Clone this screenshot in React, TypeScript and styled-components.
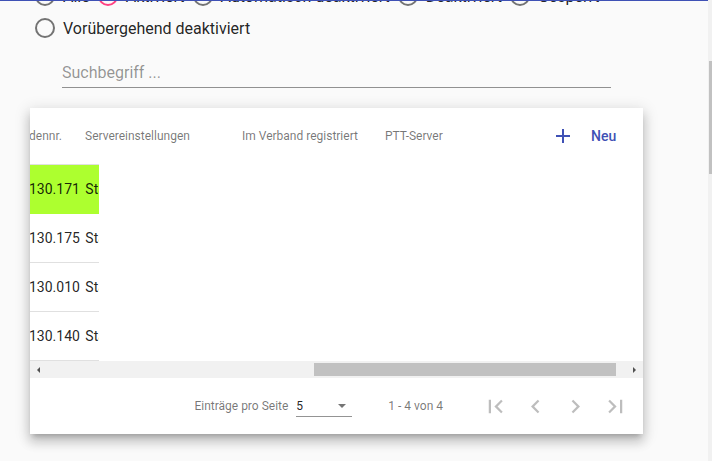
import styled, { createGlobalStyle } from "styled-components";

const GlobalStyle = createGlobalStyle`
  html,
  body {
    margin: 0;
    height: 100%;
    overflow: hidden;
  }

  body {
    background: #fafafa;
    font-family: Roboto, "Noto Sans", sans-serif;
    -webkit-font-smoothing: antialiased;
  }

  #root {
    height: 100%;
  }
`;

// --- page shell -------------------------------------------------------------

const Shell = styled.div`
  display: flex;
  height: 100vh;
`;

const Main = styled.main`
  flex: 1;
  min-width: 0;
  overflow: hidden;
  border-top: 1px solid #3f51b5;
`;

// the page is scrolled down a bit, so the first radio row is cut by the toolbar
const ScrolledContent = styled.div`
  margin-top: -21px;
`;

const PageScrollTrack = styled.div`
  width: 4px;
  flex-shrink: 0;
  background: #f1f1f1;
`;

const PageScrollThumb = styled.div`
  margin: 61px 0 0 1px;
  height: 113px;
  background: #c1c1c1;
`;

// --- status filter ----------------------------------------------------------

const RadioGroup = styled.div`
  display: flex;
  flex-wrap: wrap;
  width: 600px;
  padding-left: 27px;
`;

const RadioOption = styled.label`
  display: flex;
  align-items: center;
  height: 32px;
  font-size: 16px;
  color: rgba(0, 0, 0, 0.87);
  cursor: pointer;
`;

const RadioControl = styled.span<{ $checked?: boolean }>`
  display: flex;
  align-items: center;
  justify-content: center;
  width: 36px;
  height: 32px;
  flex-shrink: 0;

  &::before {
    content: "";
    box-sizing: border-box;
    width: 20px;
    height: 20px;
    border-radius: 50%;
    border: 2px solid
      ${(p) => (p.$checked ? "#ff4081" : "rgba(0, 0, 0, 0.54)")};
    background: ${(p) =>
      p.$checked
        ? "radial-gradient(circle, #ff4081 0 5px, transparent 5.5px)"
        : "transparent"};
  }
`;

const SearchField = styled.div`
  margin: 16px 0 0 62px;
  width: 549px;
  padding-bottom: 3px;
  border-bottom: 1px solid rgba(0, 0, 0, 0.42);
`;

const SearchInput = styled.input`
  display: block;
  width: 100%;
  height: 24px;
  padding: 0;
  border: 0;
  outline: none;
  background: transparent;
  font: 16px Roboto, sans-serif;
  color: rgba(0, 0, 0, 0.87);

  &::placeholder {
    color: rgba(0, 0, 0, 0.42);
  }
`;

// --- table card -------------------------------------------------------------

const Card = styled.section`
  margin: 20px 0 0 30px;
  width: 613px;
  background: #fff;
  box-shadow: 0 5px 5px -3px rgba(0, 0, 0, 0.2),
    0 8px 10px 1px rgba(0, 0, 0, 0.14), 0 3px 14px 2px rgba(0, 0, 0, 0.12);
`;

const HeaderRow = styled.div`
  display: flex;
  height: 56px;
  font-size: 12px;
  color: rgba(0, 0, 0, 0.54);
`;

const HeadCell = styled.div<{ $width?: number; $clipStart?: boolean }>`
  box-sizing: border-box;
  flex: ${(p) => (p.$width ? `0 0 ${p.$width}px` : "1 1 auto")};
  display: flex;
  align-items: center;
  justify-content: ${(p) => (p.$clipStart ? "flex-end" : "flex-start")};
  padding-right: ${(p) => (p.$clipStart ? 23 : 0)}px;
  overflow: hidden;
  white-space: nowrap;

  span {
    flex-shrink: 0;
  }
`;

const AddButton = styled.button`
  display: flex;
  align-items: center;
  gap: 16px;
  padding: 0 27px 0 0;
  border: 0;
  background: none;
  font: 500 14px Roboto, sans-serif;
  color: #3f51b5;
  cursor: pointer;
`;

const Body = styled.div`
  width: 69px;
  border-top: 1px solid rgba(0, 0, 0, 0.12);
`;

const Row = styled.div<{ $highlight?: boolean }>`
  display: flex;
  align-items: center;
  height: 48px;
  overflow: hidden;
  white-space: nowrap;
  font-size: 14px;
  word-spacing: 2px;
  color: rgba(0, 0, 0, 0.87);
  background: ${(p) => (p.$highlight ? "#adff2f" : "transparent")};
  border-bottom: 1px solid
    ${(p) => (p.$highlight ? "#adff2f" : "rgba(0, 0, 0, 0.12)")};

  span {
    margin-left: -1px;
  }
`;

const HScrollBar = styled.div`
  display: flex;
  height: 17px;
  background: #f1f1f1;
`;

const ScrollArrow = styled.div<{ $dir: "left" | "right" }>`
  display: flex;
  align-items: center;
  justify-content: center;
  width: 17px;
  flex-shrink: 0;

  &::before {
    content: "";
    border-top: 3px solid transparent;
    border-bottom: 3px solid transparent;
    ${(p) =>
      p.$dir === "left"
        ? "border-right: 3px solid #505050;"
        : "border-left: 3px solid #505050;"}
  }
`;

const ScrollTrack = styled.div`
  flex: 1;
  display: flex;
  align-items: center;
`;

const ScrollThumb = styled.div`
  height: 13px;
  background: #c1c1c1;
`;

const Paginator = styled.div`
  display: flex;
  align-items: center;
  justify-content: flex-end;
  height: 56px;
  padding: 0 8px;
  font-size: 12px;
  color: rgba(0, 0, 0, 0.54);
`;

const PageSize = styled.div`
  display: flex;
  align-items: center;
  margin-right: 8px;
`;

const PageSizeLabel = styled.span`
  margin: 0 4px;
`;

const PageSizeSelect = styled.div`
  box-sizing: border-box;
  display: flex;
  align-items: center;
  justify-content: space-between;
  width: 56px;
  height: 21px;
  margin: 0 4px;
  padding-right: 6px;
  border-bottom: 1px solid rgba(0, 0, 0, 0.42);
  color: rgba(0, 0, 0, 0.87);
`;

const SelectArrow = styled.span`
  border-left: 4px solid transparent;
  border-right: 4px solid transparent;
  border-top: 4px solid rgba(0, 0, 0, 0.54);
`;

const RangeLabel = styled.span`
  margin: 0 32px 0 24px;
`;

const PageButton = styled.button`
  display: flex;
  align-items: center;
  justify-content: center;
  width: 40px;
  height: 40px;
  padding: 0;
  border: 0;
  background: none;
  color: rgba(0, 0, 0, 0.26);
`;

// --- icons ------------------------------------------------------------------

const paths = {
  add: "M19 13h-6v6h-2v-6H5v-2h6V5h2v6h6v2z",
  first: "M18.41 16.59L13.82 12l4.59-4.59L17 6l-6 6 6 6zM6 6h2v12H6z",
  prev: "M15.41 7.41L14 6l-6 6 6 6 1.41-1.41L10.83 12z",
  next: "M10 6L8.59 7.41 13.17 12l-4.58 4.59L10 18l6-6z",
  last: "M5.59 7.41L10.18 12l-4.59 4.59L7 18l6-6-6-6zM16 6h2v12h-2z",
};

const Icon = ({ name, size = 24 }: { name: keyof typeof paths; size?: number }) => (
  <svg width={size} height={size} viewBox="0 0 24 24" fill="currentColor">
    <path d={paths[name]} />
  </svg>
);

// --- data -------------------------------------------------------------------

const statusOptions = [
  { label: "Alle" },
  { label: "Aktiviert", checked: true },
  { label: "Automatisch deaktiviert" },
  { label: "Deaktiviert" },
  { label: "Gesperrt" },
  { label: "Vorübergehend deaktiviert" },
];

const servers = [
  { id: "130.171 Standort Nord", selected: true },
  { id: "130.175 Standort Süd" },
  { id: "130.010 Standort West" },
  { id: "130.140 Standort Ost" },
];

// horizontal scroll state of the table
const TABLE_WIDTH = 1175;
const VIEW_WIDTH = 613;
const SCROLL_LEFT = 542;
const TRACK = VIEW_WIDTH - 34;

const App = () => {
  const thumbWidth = Math.round((TRACK * VIEW_WIDTH) / TABLE_WIDTH);
  const thumbLeft = Math.round(
    (SCROLL_LEFT / (TABLE_WIDTH - VIEW_WIDTH)) * (TRACK - thumbWidth)
  );

  return (
    <Shell>
      <GlobalStyle />
      <Main>
        <ScrolledContent>
          <RadioGroup>
            {statusOptions.map((o) => (
              <RadioOption key={o.label}>
                <RadioControl $checked={o.checked} />
                {o.label}
              </RadioOption>
            ))}
          </RadioGroup>

          <SearchField>
            <SearchInput placeholder="Suchbegriff ..." />
          </SearchField>

          <Card>
            <HeaderRow>
              <HeadCell $width={55} $clipStart>
                <span>Kundennr.</span>
              </HeadCell>
              <HeadCell $width={157}>Servereinstellungen</HeadCell>
              <HeadCell $width={143}>Im Verband registriert</HeadCell>
              <HeadCell>PTT-Server</HeadCell>
              <HeadCell $width={92}>
                <AddButton>
                  <Icon name="add" />
                  Neu
                </AddButton>
              </HeadCell>
            </HeaderRow>

            <Body>
              {servers.map((s) => (
                <Row key={s.id} $highlight={s.selected}>
                  <span>{s.id}</span>
                </Row>
              ))}
            </Body>

            <HScrollBar>
              <ScrollArrow $dir="left" />
              <ScrollTrack>
                <ScrollThumb
                  style={{ marginLeft: thumbLeft, width: thumbWidth }}
                />
              </ScrollTrack>
              <ScrollArrow $dir="right" />
            </HScrollBar>

            <Paginator>
              <PageSize>
                <PageSizeLabel>Einträge pro Seite</PageSizeLabel>
                <PageSizeSelect>
                  5
                  <SelectArrow />
                </PageSizeSelect>
              </PageSize>
              <RangeLabel>1 - 4 von 4</RangeLabel>
              <PageButton disabled>
                <Icon name="first" size={27} />
              </PageButton>
              <PageButton disabled>
                <Icon name="prev" size={27} />
              </PageButton>
              <PageButton disabled>
                <Icon name="next" size={27} />
              </PageButton>
              <PageButton disabled>
                <Icon name="last" size={27} />
              </PageButton>
            </Paginator>
          </Card>
        </ScrolledContent>
      </Main>
      <PageScrollTrack>
        <PageScrollThumb />
      </PageScrollTrack>
    </Shell>
  );
};

export default App;
